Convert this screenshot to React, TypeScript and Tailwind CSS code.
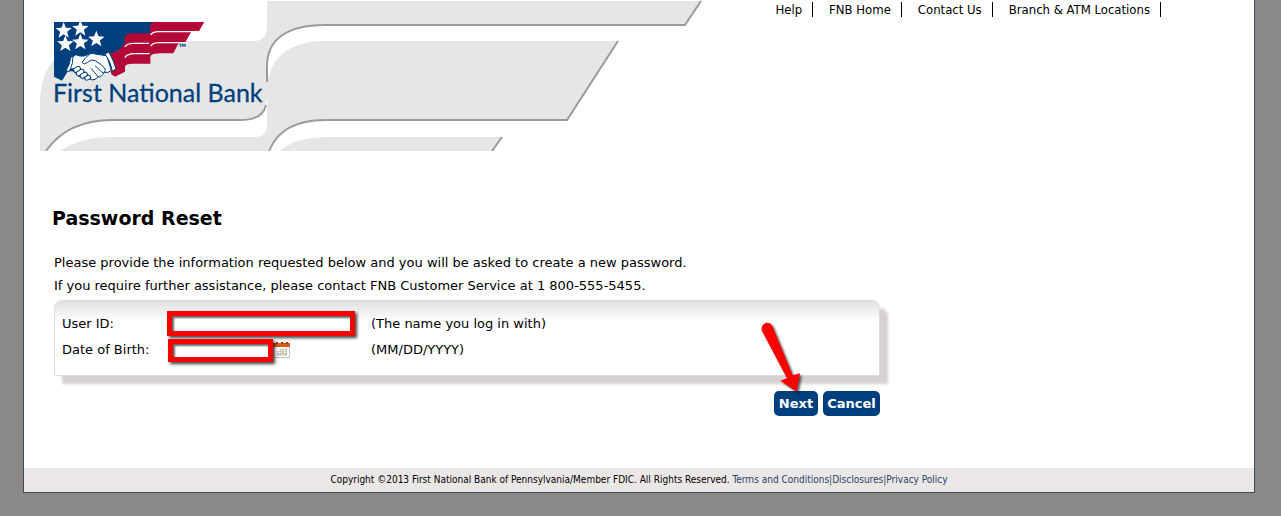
import type { ReactNode } from 'react'

const navLinks = ['Help', 'FNB Home', 'Contact Us', 'Branch & ATM Locations']
const legalLinks = ['Terms and Conditions', 'Disclosures', 'Privacy Policy']

const stars = [
  [47, 44],
  [97, 38],
  [52, 84],
  [97, 79],
  [145, 70],
]

function starPoints(cx: number, cy: number) {
  return Array.from({ length: 10 }, (_, i) => {
    const r = i % 2 === 0 ? 26 : 11
    const a = -Math.PI / 2 + (i * Math.PI) / 5
    return `${(cx + r * Math.cos(a)).toFixed(1)},${(cy + r * Math.sin(a)).toFixed(1)}`
  }).join(' ')
}

// Flag with the handshake in front of it
function FlagMark() {
  return (
    <svg x="48" y="16" width="165" height="92" viewBox="0 0 495 276">
      <path d="M18 18H330L308 54L234 62L230 92L180 122L150 172L60 165L42 194L18 182Z" fill="#003f7d" />
      <path
        d="M322 18H469L452 47H430L412 79H393L376 112H340Q310 112 307 122V143H255Q232 143 231 152V167L201 182L190 175L178 115Q215 110 230 82V65Q232 52 255 52H306V32Q308 18 322 18Z"
        fill="#b30838"
      />
      <g fill="none" stroke="#fff" strokeWidth="4">
        <path d="M308 57Q312 48 332 47H454" />
        <path d="M308 91Q312 81 332 80H414" />
        <path d="M231 93Q235 83 255 82H303" />
        <path d="M231 125Q235 115 255 113H305" />
      </g>
      {stars.map(([x, y]) => (
        <polygon key={`${x}-${y}`} points={starPoints(x, y)} fill="#fff" />
      ))}
      <g fill="#fff" stroke="#003f7d" strokeWidth="3" strokeLinejoin="round" strokeLinecap="round">
        <path d="M70 125L84 116Q96 122 108 120L125 114Q134 110 146 115L176 119L190 163Q182 172 168 169Q162 183 148 184Q140 196 124 189Q110 194 104 183Q90 184 86 172Q74 170 78 158L58 160Q66 144 70 125Z" />
        <path d="M170 113L183 109Q196 132 204 158L193 166Q188 136 170 113Z" />
        <path d="M68 124L75 121Q76 142 64 167L54 164Q66 146 68 124Z" />
        <path d="M125 114Q112 124 102 139Q108 148 118 140L129 132L142 134Q158 144 170 156Q176 164 168 169" />
        <path d="M142 150L164 170M130 158L150 182" fill="none" />
        <rect x="76" y="153" width="22" height="14" rx="7" transform="rotate(-32 87 160)" />
        <rect x="84" y="163" width="25" height="14" rx="7" transform="rotate(-32 96 170)" />
        <rect x="96" y="171" width="23" height="14" rx="7" transform="rotate(-28 107 178)" />
        <rect x="110" y="179" width="18" height="12" rx="6" transform="rotate(-24 119 185)" />
      </g>
      <text x="392" y="93" fontSize="13" fontWeight="700" fill="#003f7d">TM</text>
    </svg>
  )
}

function Banner() {
  return (
    <svg
      viewBox="40 0 662 151"
      className="block h-auto w-full max-w-[662px]"
      role="img"
      aria-label="First National Bank"
    >
      <g fill="#e6e6e6">
        <path d="M40 151V104C40 66 60 41 105 41H253Q267 41 267 27V1H701L685 25H325C286 25 267 40 267 66V97Q265 120 240 120H112C82 120 60 131 46 151Z" />
        <path d="M60 151C75 141 92 137 112 137H255Q267 137 267 125V86C270 60 286 41 325 41H618L567 120H325C295 120 277 131 268 151Z" />
        <path d="M280 151C290 142 305 137 330 137H502L492 151Z" />
      </g>
      <g fill="none" stroke="#9b9b9b" strokeWidth="2">
        <path d="M267 82V66C267 40 286 25 325 25H685L701 1" />
        <path d="M266 105Q263 120 240 120H112C82 120 60 131 46 151" />
        <path d="M618 41L567 120H325C295 120 277 131 269 151" />
        <path d="M502 137L492 151" />
      </g>
      <FlagMark />
      <text
        x="53"
        y="102"
        fill="#003f7d"
        stroke="#003f7d"
        strokeWidth="0.3"
        className="font-['Lato',sans-serif] text-[25px]"
      >
        First National Bank
      </text>
    </svg>
  )
}

function CalendarIcon() {
  return (
    <svg width="17" height="16" viewBox="0 0 17 16">
      <rect x=".5" y="2" width="16" height="13.5" fill="#fff" stroke="#c4c4c4" />
      <rect x="0" y="1" width="17" height="4" fill="#dd5a14" />
      <path d="M3 0h2v2H3zM8 0h2v2H8zM13 0h2v2h-2z" fill="#9a3b10" />
      <path d="M6 7h8v6H6zM4 9h10v4.500H4z" fill="#b9b9b9" />
      <path d="M4 8.500h10M4 10.500h10M6.500 7v6M9 7v6M11.500 7v6" stroke="#fff" strokeWidth=".6" />
      <rect x="9" y="9" width="2" height="2" fill="#f2c230" />
    </svg>
  )
}

function Arrow() {
  return (
    <svg
      className="pointer-events-none absolute -top-[70px] left-[-14px] drop-shadow-[2px_2px_1px_rgba(0,0,0,0.6)]"
      width="42"
      height="72"
      viewBox="0 0 126 216"
      aria-hidden="true"
    >
      <path
        d="M6 30C-2 10 26-5 37 15L98 163L120 157L110 212L61 179L81 172Z"
        fill="#fe0000"
      />
    </svg>
  )
}

function Row({ id, label, hint, children }: { id: string; label: string; hint: string; children: ReactNode }) {
  return (
    <div className="grid h-[26px] grid-cols-[105px_204px_auto] items-start leading-[26px]">
      <label htmlFor={id}>{label}</label>
      <div className="flex items-center">{children}</div>
      <span>{hint}</span>
    </div>
  )
}

const fieldClass =
  'border-[5px] border-[#fe0000] bg-white px-1 text-xs outline-none shadow-[2px_2px_3px_rgba(0,0,0,0.75),inset_2px_2px_2px_rgba(0,0,0,0.6)]'
const buttonClass = 'h-[25px] rounded-[5px] bg-[#003f7d] text-center font-bold text-white'

export default function App() {
  return (
    <div className="min-h-screen bg-[#8b8888] pr-[26px] pb-6 pl-[23px] font-['Verdana','DejaVu_Sans',sans-serif] text-[13px] text-black">
      <div className="border border-t-0 border-[#3a4b5c] bg-white">
        <header className="flex items-start justify-between pl-4">
          <Banner />
          <nav className="flex shrink-0 gap-4 pt-0.5 pr-[93px] font-['Tahoma','DejaVu_Sans_Condensed','DejaVu_Sans',sans-serif] text-[13px] leading-[15px]">
            {navLinks.map(link => (
              <a key={link} href="#" className="border-r border-black pr-2.5">
                {link}
              </a>
            ))}
          </nav>
        </header>

        <main className="max-w-[856px] pt-[54px] pb-[52px] pl-[30px]">
          <h1 className="-ml-0.5 text-[19px] leading-[26px] font-bold">Password Reset</h1>
          <div className="pt-5 leading-[23px]">
            <p>Please provide the information requested below and you will be asked to create a new password.</p>
            <p>If you require further assistance, please contact FNB Customer Service at 1 800-555-5455.</p>
          </div>
          <form onSubmit={e => e.preventDefault()}>
            <div className="mt-[3px] rounded-t-lg border border-[#dcdcdc] bg-white bg-linear-to-b from-[#e0e0e0] to-white to-[20px] pt-2.5 pb-3 pl-[7px] shadow-[8px_8px_3px_#d6d0d0]">
              <Row id="user-id" label="User ID:" hint="(The name you log in with)">
                <input id="user-id" type="text" className={`${fieldClass} h-[25px] w-[188px]`} />
              </Row>
              <Row id="birth-date" label="Date of Birth:" hint="(MM/DD/YYYY)">
                <input id="birth-date" type="text" className={`${fieldClass} relative ml-px mt-0.5 h-[23px] w-[105px]`} />
                <button type="button" aria-label="Choose date">
                  <CalendarIcon />
                </button>
              </Row>
            </div>
            <div className="mt-[15px] flex justify-end gap-[5px]">
              <div className="relative flex">
                <button type="submit" className={`${buttonClass} w-11`}>Next</button>
                <Arrow />
              </div>
              <button type="button" className={`${buttonClass} w-[57px]`}>Cancel</button>
            </div>
          </form>
        </main>

        <footer className="bg-[#ebe7e7] text-center font-['Tahoma','DejaVu_Sans_Condensed','DejaVu_Sans',sans-serif] text-[10px] leading-6">
          Copyright ©2013 First National Bank of Pennsylvania/Member FDIC. All Rights Reserved.{' '}
          {legalLinks.map((link, i) => (
            <span key={link} className="text-[#1c4468]">
              {i > 0 && '|'}
              <a href="#">{link}</a>
            </span>
          ))}
        </footer>
      </div>
    </div>
  )
}
